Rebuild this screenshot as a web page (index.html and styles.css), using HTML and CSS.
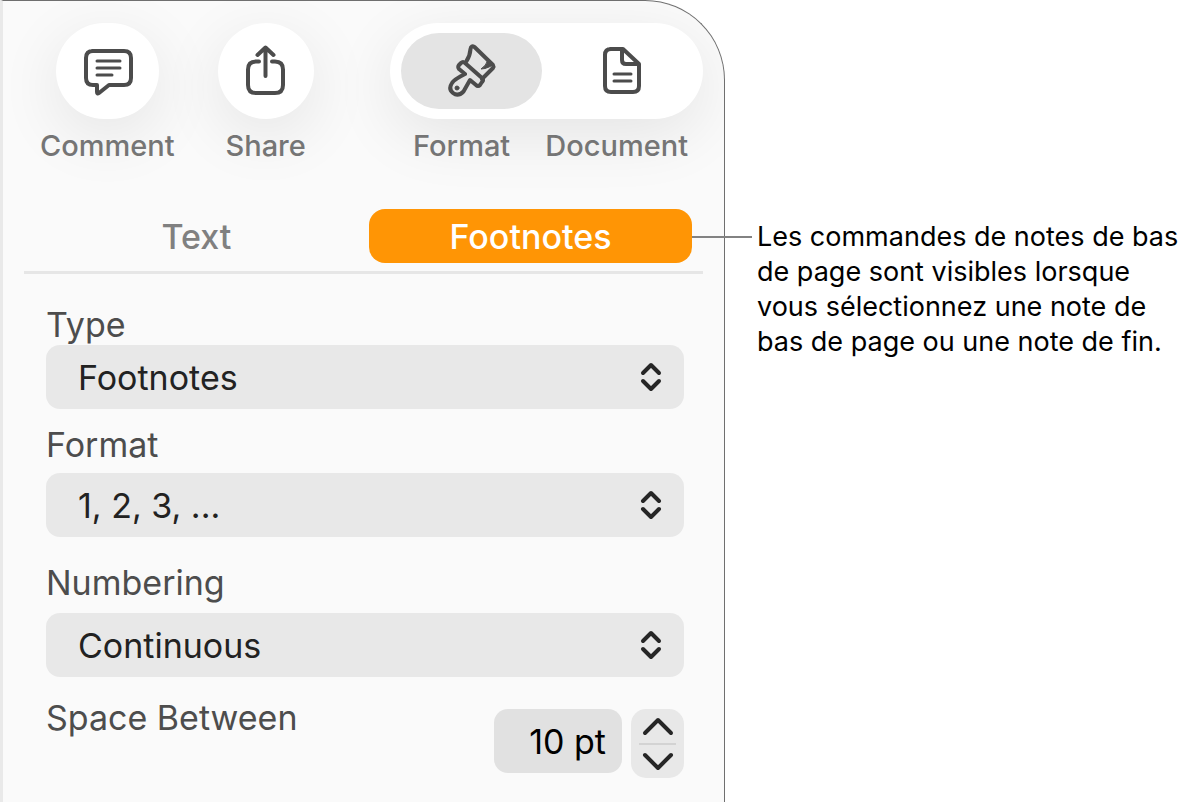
FILE: index.html
```html
<!DOCTYPE html>
<html lang="fr">
<head>
    <meta charset="UTF-8">
    <meta name="viewport" content="width=device-width, initial-scale=1">
    <title>Notes de bas de page</title>
    <link rel="stylesheet" href="styles.css">
</head>
<body>
    <main class="figure">
        <section class="panel">
            <div class="toolbar">
                <div class="tool">
                    <button type="button" class="tool-button wide" id="comment">
                        <svg width="52" height="52" viewBox="0 0 52 52">
                            <path d="M11 6H43Q50 6 50 13V33Q50 40 43 40H28L18 48Q16 49.500 16 47V40H12Q5 40 5 33V13Q5 6 12 6" />
                            <path class="thin" d="M16 16H39M16 23H39M16 30H31" />
                        </svg>
                    </button>
                    <label for="comment">Comment</label>
                </div>
                <div class="tool">
                    <button type="button" class="tool-button" id="share">
                        <svg width="52" height="52" viewBox="0 0 52 52">
                            <path d="M19 16.500H16Q8 16.500 8 24.500V40Q8 48 16 48H35Q43 48 43 40V24.500Q43 16.500 35 16.500H32" />
                            <path d="M25.500 31V3M17.500 10L25.500 2.500L33.500 10" />
                        </svg>
                    </button>
                    <label for="share">Share</label>
                </div>
                <div class="tool tool-group">
                    <div class="segments">
                        <button type="button" class="segment selected" id="format">
                            <svg width="52" height="56" viewBox="0 0 52 56">
                                <path d="M20.500 18Q24 13 24.500 6Q25 2 28.500 4L47 22Q48 23.500 47 25L36 36" />
                                <path d="M19 20L36 35Q38 37 36 39L34 42Q32 44 30 42L24 37L17.500 48.500Q12 54 7 50Q2 46 6 40Q8 36.500 19 31L13 26Q11.500 24 13 22L15 20Q17 18 19 20Z" />
                                <path class="fill" d="M42 17L47 22L43 24Q39 26 35 26Q40 23 42 17Z" />
                                <circle class="fill" cx="11" cy="45" r="2" />
                            </svg>
                        </button>
                        <button type="button" class="segment" id="document">
                            <svg width="40" height="50" viewBox="0 0 40 50">
                                <path d="M8 3H21L37 18V40Q37 46 31 46H9Q3 46 3 40V9Q3 3 9 3M20 3V14Q20 18 24 18H37" />
                                <path class="thin" d="M12 28H29M12 35H29" />
                            </svg>
                        </button>
                    </div>
                    <div class="segment-labels">
                        <label for="format">Format</label>
                        <label for="document">Document</label>
                    </div>
                </div>
            </div>

            <div class="tabs">
                <button type="button" class="tab">Text</button>
                <button type="button" class="tab active">Footnotes</button>
            </div>

            <form class="settings">
                <div class="field field-type">
                    <label for="type">Type</label>
                    <div class="select-box">
                        <select id="type"><option>Footnotes</option></select>
                        <svg width="22" height="30" viewBox="0 0 22 30"><path d="M3 11L11 3L19 11M3 19L11 27L19 19" /></svg>
                    </div>
                </div>
                <div class="field field-format">
                    <label for="number-format">Format</label>
                    <div class="select-box">
                        <select id="number-format"><option>1, 2, 3, ...</option></select>
                        <svg width="22" height="30" viewBox="0 0 22 30"><path d="M3 11L11 3L19 11M3 19L11 27L19 19" /></svg>
                    </div>
                </div>
                <div class="field field-numbering">
                    <label for="numbering">Numbering</label>
                    <div class="select-box">
                        <select id="numbering"><option>Continuous</option></select>
                        <svg width="22" height="30" viewBox="0 0 22 30"><path d="M3 11L11 3L19 11M3 19L11 27L19 19" /></svg>
                    </div>
                </div>
                <div class="space-row">
                    <label for="space">Space Between</label>
                    <input type="text" id="space" value="10 pt">
                    <div class="stepper">
                        <button type="button" aria-label="Increase"><svg width="34" height="22" viewBox="0 0 34 22"><path d="M4 18L17 5L30 18" /></svg></button>
                        <button type="button" aria-label="Decrease"><svg width="34" height="22" viewBox="0 0 34 22"><path d="M4 4L17 17L30 4" /></svg></button>
                    </div>
                </div>
            </form>
        </section>

        <p class="callout">Les commandes de notes de bas de page sont visibles lorsque vous sélectionnez une note de bas de page ou une note de fin.</p>
    </main>
</body>
</html>
```
FILE: styles.css
```css
* {
    box-sizing: border-box;
}

body {
    margin: 0;
    background: #fff;
    color: #000;
    font-family: Inter, "Liberation Sans", sans-serif;
}

button, select, input {
    margin: 0;
    padding: 0;
    border: none;
    background: none;
    font: inherit;
}

svg {
    display: block;
    fill: none;
    stroke: #4c4c4c;
    stroke-width: 4;
    stroke-linecap: round;
    stroke-linejoin: round;
}

.thin {
    stroke-width: 3;
}

.fill {
    fill: #4c4c4c;
    stroke-width: 1;
}

.figure {
    display: grid;
    grid-template-columns: 725fr 474fr;
    align-items: start;
}

.panel {
    padding-bottom: 24px;
    border: 1px solid #6f6f6f;
    border-left: 3px solid #e9e9e9;
    border-bottom: none;
    border-top-right-radius: 80px;
    background: #fafafa;
}

/* Toolbar */
.toolbar {
    display: flex;
    gap: 43px;
    padding: 22px 21px 45px 37px;
    border-top-right-radius: 79px;
    overflow: hidden;
}

.tool {
    display: flex;
    flex-direction: column;
    align-items: center;
    color: #757575;
    font-size: 29px;
    font-weight: 500;
    line-height: 36px;
}

.tool label {
    margin-top: 9px;
}

.tool-button, .segments {
    height: 96px;
    border-radius: 48px;
    background: #fff;
    box-shadow: 0 16px 64px rgba(0, 0, 0, 0.09);
}

.tool-button {
    display: grid;
    place-items: center;
    width: 96px;
}

.tool-button.wide {
    width: 103px;
}

.tool-group {
    align-items: stretch;
    margin-left: auto;
}

.segments {
    display: flex;
    gap: 9px;
    padding: 10px 11px;
}

.segment {
    display: grid;
    place-items: center;
    width: 141px;
    border-radius: 38px;
}

.segment.selected {
    background: #e4e4e4;
}

.segment-labels {
    display: flex;
    justify-content: space-between;
    padding: 0 15px 0 23px;
}

/* Tabs */
.tabs {
    position: relative;
    display: grid;
    grid-template-columns: 1fr 1fr;
    gap: 11px;
    margin: 0 21px;
    padding: 0 11px 8px;
    border-bottom: 3px solid #e6e6e6;
}

.tab {
    position: relative;
    height: 54px;
    border-radius: 16px;
    color: #808080;
    font-size: 34px;
    font-weight: 500;
}

.tab.active {
    background: #ff9505;
    color: #fff;
}

/* line that leads to the caption */
.tab.active::after {
    content: "";
    position: absolute;
    top: 27px;
    left: 100%;
    width: 60px;
    height: 2px;
    background: #828282;
}

/* Settings */
.settings {
    padding: 31px 40px 0 43px;
    font-size: 34px;
}

.settings label {
    display: block;
    color: #4d4d4d;
    line-height: 40px;
}

.field-type {
    margin-bottom: 16px;
}

.field-format {
    margin-bottom: 26px;
}

.field-format label {
    margin-bottom: 8px;
}

.field-numbering {
    margin-bottom: 21px;
}

.field-numbering label {
    margin-bottom: 10px;
}

.select-box {
    position: relative;
}

.select-box select {
    display: block;
    appearance: none;
    width: 100%;
    height: 64px;
    padding: 0 60px 0 32px;
    border-radius: 14px;
    background: #e8e8e8;
    color: #222;
}

.select-box svg {
    position: absolute;
    top: 17px;
    right: 22px;
    stroke: #262626;
    pointer-events: none;
}

.space-row {
    display: flex;
    align-items: flex-start;
}

.space-row input {
    width: 128px;
    height: 64px;
    margin: 11px 9px 0 auto;
    padding-right: 16px;
    border-radius: 14px;
    background: #e1e1e1;
    color: #000;
    text-align: right;
}

.stepper {
    width: 53px;
    margin-top: 11px;
    padding: 0 8px;
    border-radius: 15px;
    background: #e8e8e8;
}

.stepper button {
    display: grid;
    place-items: center;
    width: 100%;
    height: 34px;
}

.stepper button + button {
    height: 35px;
    border-top: 2px solid #d3d3d3;
}

.stepper svg {
    stroke: #262626;
}

/* Caption */
.callout {
    margin: 219px 0 0;
    padding: 0 12px 0 32px;
    font-size: 27px;
    line-height: 35px;
}
```
